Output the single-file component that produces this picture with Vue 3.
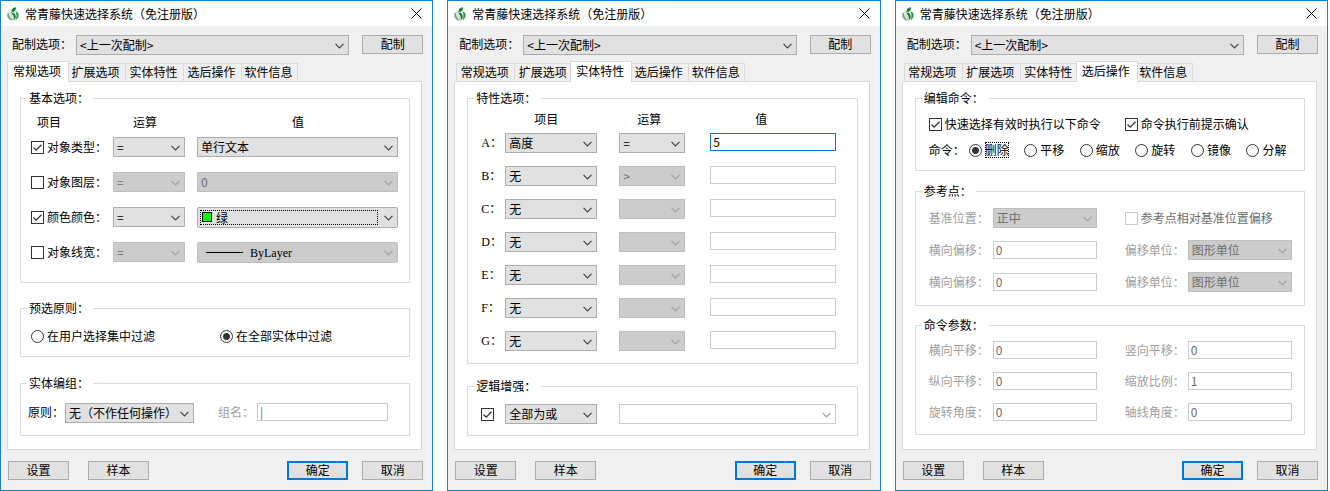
<template>
  <main class="screens">
    <section v-for="win in windows" :key="win.id" class="window">
      <header class="title-bar">
        <svg class="logo" viewBox="0 0 14 14" aria-hidden="true">
          <path d="M2.500 5C.8 6.400.8 9.400 2.400 11.400 3.800 13.200 6.400 13.600 8 13 4.800 12 2.800 9 2.500 5z" fill="#7f9f8a" />
          <path d="M3 5.200C5.400 4.800 7.800 6.400 8.600 9c.5 1.800 0 3.200-.6 4C5 12 3 9 3 5.200z" fill="#d5e2d8" />
          <path d="M9.800.200C6.800.6 5 2.200 5.600 5 8.600 5 10.400 3.200 9.800.2z" fill="#17833a" />
          <path d="M4.600 5.600C7.400 5 9.600 6.600 9.800 9.400c0 1.600-.8 3-2 3.800.6-3-.4-5.600-3.200-7.600z" fill="#1c7a3c" />
          <path d="M9.400 4.200c2.400.4 3.600 2.400 3.200 4.800-.3 2-1.600 3.600-3.200 4.200 1.400-3 1.400-6.200 0-9z" fill="#2f9a4c" />
        </svg>
        <h1>常青藤快速选择系统（免注册版）</h1>
        <button type="button" class="close" aria-label="关闭">
          <svg viewBox="0 0 11 11"><path d="M.5.5l10 10M10.5.5l-10 10" /></svg>
        </button>
      </header>

      <div class="config-row">
        <label :for="`${win.id}-config`">配制选项：</label>
        <select :id="`${win.id}-config`">
          <option>&lt;上一次配制&gt;</option>
        </select>
        <button type="button" class="btn">配制</button>
      </div>

      <div class="tabs" role="tablist">
        <button
          v-for="tab in tabs"
          :key="tab"
          type="button"
          role="tab"
          class="tab"
          :class="{ active: tab === win.tab }"
          :aria-selected="tab === win.tab"
          @click="win.tab = tab"
        >
          {{ tab }}
        </button>
      </div>

      <!-- 常规选项 -->
      <div v-if="win.tab === '常规选项'" class="panel general">
        <fieldset class="basic">
          <legend>基本选项：</legend>
          <div class="head">
            <span>项目</span>
            <span>运算</span>
            <span>值</span>
          </div>
          <div class="rows">
            <template v-for="row in basicRows" :key="row.label">
              <label class="check">
                <input v-model="row.on" type="checkbox" />{{ row.label }}：
              </label>
              <select class="op" :disabled="!row.on" :aria-label="`${row.label}运算`">
                <option>=</option>
              </select>
              <div class="value" :class="row.kind">
                <select :disabled="!row.on" :aria-label="`${row.label}值`">
                  <option>{{ row.value }}</option>
                </select>
                <i v-if="row.kind === 'color'" class="swatch"></i>
                <i v-if="row.kind === 'color'" class="focus-rect"></i>
                <i v-if="row.kind === 'line'" class="stroke"></i>
              </div>
            </template>
          </div>
        </fieldset>

        <fieldset class="preselect">
          <legend>预选原则：</legend>
          <label v-for="item in scopes" :key="item" class="check">
            <input v-model="scope" type="radio" name="scope" :value="item" />{{ item }}
          </label>
        </fieldset>

        <fieldset class="grouping">
          <legend>实体编组：</legend>
          <label for="group-rule">原则：</label>
          <select id="group-rule">
            <option>无（不作任何操作）</option>
          </select>
          <label for="group-name" class="second muted">组名：</label>
          <input id="group-name" type="text" value="|" disabled />
        </fieldset>
      </div>

      <!-- 实体特性 -->
      <div v-else-if="win.tab === '实体特性'" class="panel traits">
        <fieldset class="trait-list">
          <legend>特性选项：</legend>
          <div class="head">
            <span>项目</span>
            <span>运算</span>
            <span>值</span>
          </div>
          <div class="rows">
            <template v-for="row in traitRows" :key="row.key">
              <label :for="`trait-${row.key}`" class="letter">{{ row.key }}：</label>
              <select :id="`trait-${row.key}`" class="item">
                <option>{{ row.item }}</option>
              </select>
              <select class="op" :disabled="row.item === '无'" :aria-label="`${row.key}运算`">
                <option>{{ row.op }}</option>
              </select>
              <input
                v-model="row.value"
                type="text"
                :class="{ focused: row.key === 'A' }"
                :aria-label="`${row.key}值`"
              />
            </template>
          </div>
        </fieldset>

        <fieldset class="logic">
          <legend>逻辑增强：</legend>
          <input type="checkbox" checked aria-label="逻辑增强" />
          <select class="item" aria-label="逻辑方式">
            <option>全部为或</option>
          </select>
          <select class="blank" disabled aria-label="逻辑表达式">
            <option></option>
          </select>
        </fieldset>
      </div>

      <!-- 选后操作 -->
      <div v-else-if="win.tab === '选后操作'" class="panel actions">
        <fieldset class="commands">
          <legend>编辑命令：</legend>
          <div class="switches">
            <label class="check"><input type="checkbox" checked />快速选择有效时执行以下命令</label>
            <label class="check"><input type="checkbox" checked />命令执行前提示确认</label>
          </div>
          <div class="command-row">
            <span>命令：</span>
            <label v-for="item in commands" :key="item" class="check">
              <input v-model="command" type="radio" name="command" :value="item" />
              <span :class="{ dotted: item === command }">{{ item }}</span>
            </label>
          </div>
        </fieldset>

        <fieldset class="pairs reference">
          <legend>参考点：</legend>
          <label for="base-pos" class="muted">基准位置：</label>
          <select id="base-pos" disabled>
            <option>正中</option>
          </select>
          <label class="check second wide"><input type="checkbox" disabled />参考点相对基准位置偏移</label>
          <template v-for="n in 2" :key="n">
            <label :for="`offset-${n}`" class="muted">横向偏移：</label>
            <input :id="`offset-${n}`" type="text" value="0" disabled />
            <label :for="`unit-${n}`" class="second muted">偏移单位：</label>
            <select :id="`unit-${n}`" disabled>
              <option>图形单位</option>
            </select>
          </template>
        </fieldset>

        <fieldset class="pairs params">
          <legend>命令参数：</legend>
          <template v-for="(param, i) in params" :key="param.label">
            <label :for="`param-${i}`" class="muted" :class="{ second: i % 2 }">{{ param.label }}：</label>
            <input :id="`param-${i}`" type="text" :value="param.value" disabled />
          </template>
        </fieldset>
      </div>

      <div v-else class="panel"></div>

      <footer class="buttons">
        <button type="button" class="btn">设置</button>
        <button type="button" class="btn">样本</button>
        <button type="button" class="btn primary">确定</button>
        <button type="button" class="btn">取消</button>
      </footer>
    </section>
  </main>
</template>

<script setup>
import { ref } from 'vue';

const tabs = ['常规选项', '扩展选项', '实体特性', '选后操作', '软件信息'];

const windows = ref([
  { id: 'general', tab: '常规选项' },
  { id: 'traits', tab: '实体特性' },
  { id: 'actions', tab: '选后操作' },
]);

const basicRows = ref([
  { label: '对象类型', on: true, value: '单行文本', kind: 'plain' },
  { label: '对象图层', on: false, value: '0', kind: 'plain' },
  { label: '颜色颜色', on: true, value: '绿', kind: 'color' },
  { label: '对象线宽', on: false, value: 'ByLayer', kind: 'line' },
]);

const scopes = ['在用户选择集中过滤', '在全部实体中过滤'];
const scope = ref('在全部实体中过滤');

const traitRows = ref([
  { key: 'A', item: '高度', op: '=', value: '5' },
  { key: 'B', item: '无', op: '>', value: '' },
  { key: 'C', item: '无', op: '', value: '' },
  { key: 'D', item: '无', op: '', value: '' },
  { key: 'E', item: '无', op: '', value: '' },
  { key: 'F', item: '无', op: '', value: '' },
  { key: 'G', item: '无', op: '', value: '' },
]);

const commands = ['删除', '平移', '缩放', '旋转', '镜像', '分解'];
const command = ref('删除');

const params = [
  { label: '横向平移', value: '0' },
  { label: '竖向平移', value: '0' },
  { label: '纵向平移', value: '0' },
  { label: '缩放比例', value: '1' },
  { label: '旋转角度', value: '0' },
  { label: '轴线角度', value: '0' },
];
</script>

<style>
body {
  background: #fff;
}
</style>

<style scoped>
.screens {
  display: grid;
  grid-template-columns: repeat(3, 1fr);
  column-gap: 14px;
  padding-right: 2px;
  font-family: 'Noto Sans CJK SC', 'Liberation Sans', sans-serif;
  font-size: 12px;
  line-height: 16px;
  color: #000;
}

.screens * {
  box-sizing: border-box;
}

.window {
  display: flex;
  flex-direction: column;
  border: 1px solid #1883d7;
  background: #f0f0f0;
}

.title-bar {
  display: flex;
  align-items: center;
  height: 25px;
  padding: 0 10px 0 5px;
  background: #fff;
}

.logo {
  width: 14px;
  height: 14px;
  margin-right: 5px;
}

h1 {
  flex: 1;
  margin: 0;
  font-size: 12px;
  font-weight: 400;
  white-space: nowrap;
}

.close {
  display: flex;
  padding: 0;
  border: 0;
  background: none;
}

.close svg {
  width: 11px;
  height: 11px;
  fill: none;
  stroke: #000;
}

/* 通用控件 */
select,
input,
button {
  margin: 0;
  font: inherit;
  color: inherit;
  border-radius: 0;
  outline: none;
}

select {
  appearance: none;
  width: 100%;
  height: 20px;
  padding: 0 16px 0 3px;
  border: 1px solid #adadad;
  background: #e1e1e1
    url("data:image/svg+xml,%3Csvg xmlns='http://www.w3.org/2000/svg' width='9' height='6'%3E%3Cpath d='M.5.8l4 4 4-4' fill='none' stroke='%23444' stroke-width='1.2'/%3E%3C/svg%3E")
    no-repeat right 4px top 7px;
}

select:disabled {
  opacity: 1;
  color: #6d6d6d;
  border-color: #bfbfbf;
  background-color: #ccc;
  background-image: url("data:image/svg+xml,%3Csvg xmlns='http://www.w3.org/2000/svg' width='9' height='6'%3E%3Cpath d='M.5.8l4 4 4-4' fill='none' stroke='%23a0a0a0' stroke-width='1.2'/%3E%3C/svg%3E");
}

select.blank:disabled {
  border-color: #ccc;
  background-color: #fff;
}

input[type='text'] {
  width: 100%;
  height: 18px;
  padding: 0 2px 2px;
  border: 1px solid #ccc;
  background: #fff;
}

input[type='text'].focused {
  border-color: #0078d7;
}

input[type='text']:disabled {
  color: #6d6d6d;
}

input[type='checkbox'],
input[type='radio'] {
  appearance: none;
  flex: none;
  width: 13px;
  height: 13px;
  border: 1px solid #333;
  background: #fff;
}

input[type='checkbox']:checked {
  background: #fff
    url("data:image/svg+xml,%3Csvg xmlns='http://www.w3.org/2000/svg' width='11' height='11'%3E%3Cpath d='M1.500 5.500l2.700 2.700 5.300-5.400' fill='none' stroke='%23333' stroke-width='1.3'/%3E%3C/svg%3E")
    no-repeat center;
}

input[type='checkbox']:disabled {
  border-color: #ccc;
}

input[type='radio'] {
  border-radius: 50%;
}

input[type='radio']:checked {
  background: radial-gradient(circle, #333 3px, #fff 4px);
}

.check {
  display: flex;
  align-items: center;
  gap: 3px;
  white-space: nowrap;
}

.check:has(:disabled) {
  color: #6d6d6d;
}

.muted {
  color: #a0a0a0;
}

label {
  white-space: nowrap;
}

.btn {
  width: 61px;
  height: 19px;
  padding: 0 0 2px;
  border: 1px solid #adadad;
  background: #e1e1e1;
  line-height: 16px;
}

.btn.primary {
  border: 2px solid #0078d7;
  line-height: 14px;
}

/* 顶部配制行 */
.config-row {
  display: grid;
  grid-template-columns: 64px 1fr 61px;
  align-items: start;
  padding: 9px 9px 6px 11px;
}

.config-row label {
  line-height: 18px;
}

.config-row select {
  width: calc(100% - 13px);
}

/* 选项卡 */
.tabs {
  display: flex;
  align-items: flex-end;
  height: 20px;
  margin-left: 8px;
}

.tab {
  width: 58px;
  height: 18px;
  padding: 0 2px 2px 0;
  border: 1px solid #d9d9d9;
  border-width: 1px 0 0 1px;
  background: #f0f0f0;
  line-height: 16px;
  white-space: nowrap;
}

.tab:last-child {
  width: 57px;
  border-right-width: 1px;
}

.tab.active {
  position: relative;
  z-index: 1;
  width: 62px;
  height: 21px;
  margin: 0 -2px -1px;
  border-right-width: 1px;
  background: #fff;
}

.panel {
  flex: 1;
  margin: 0 10px 0 6px;
  padding: 8px 11px 13px 12px;
  border: 1px solid #d9d9d9;
  background: #fff;
}

fieldset {
  min-width: 0;
  margin: 0;
  padding: 0;
  border: 1px solid #dcdcdc;
}

legend {
  padding: 0 4px 0 2px;
}

.head,
.rows {
  display: grid;
}

/* 常规选项 */
.general fieldset + fieldset {
  margin-top: 17px;
}

.basic {
  padding: 0 11px 20px 10px;
}

.basic legend,
.preselect legend {
  margin-left: -4px;
}

.basic .head {
  grid-template-columns: 96px 159px 1fr;
  padding: 8px 0 7px 6px;
}

.basic .rows {
  grid-template-columns: 82px 84px 1fr;
  grid-auto-rows: 20px;
  row-gap: 15px;
}

.basic .op {
  width: 72px;
}

.value {
  position: relative;
}

.color select,
.line select {
  height: 21px;
  border-radius: 2px;
}

.color select {
  padding-left: 18px;
}

.line select {
  padding-left: 52px;
  font-family: 'Liberation Serif', serif;
  color: #000;
}

.swatch {
  position: absolute;
  top: 5px;
  left: 5px;
  width: 10px;
  height: 10px;
  border: 1px solid #000;
  background: #0f0;
}

.focus-rect {
  position: absolute;
  top: 3px;
  right: 20px;
  left: 3px;
  height: 15px;
  border: 1px dotted #000;
  pointer-events: none;
}

.stroke {
  position: absolute;
  top: 10px;
  left: 9px;
  width: 37px;
  height: 1px;
  background: #000;
}

.preselect {
  display: grid;
  grid-template-columns: 189px 1fr;
  grid-auto-rows: 18px;
  padding: 11px 10px;
}

.general .grouping {
  display: grid;
  grid-template-columns: 37px 129px 63px 1fr;
  align-items: start;
  margin-top: 18px;
  padding: 12px 21px 12px 7px;
}

.grouping legend {
  margin-left: -1px;
}

.grouping label {
  line-height: 18px;
}

.grouping .second {
  padding-left: 24px;
}

/* 实体特性 */
.trait-list {
  padding: 0 21px 12px 13px;
}

.trait-list legend,
.logic legend,
.commands legend,
.pairs legend {
  margin-left: -7px;
}

.trait-list .head {
  grid-template-columns: 103px 118px 1fr;
  padding: 5px 0 6px 53px;
}

.trait-list .rows {
  grid-template-columns: 24px 114px 91px 1fr;
  grid-auto-rows: 20px;
  row-gap: 13px;
}

.letter {
  font-family: 'Liberation Serif', 'Noto Sans CJK SC', serif;
  line-height: 20px;
}

.item {
  width: 92px;
}

.traits .op {
  width: 66px;
}

.logic {
  display: grid;
  grid-template-columns: 24px 114px 1fr;
  align-items: center;
  margin-top: 14px;
  padding: 10px 21px 11px 13px;
}

/* 选后操作 */
.actions fieldset + fieldset {
  margin-top: 12px;
}

.commands {
  padding: 9px 2px 11px 13px;
}

.switches {
  display: grid;
  grid-template-columns: 196px 1fr;
  grid-auto-rows: 18px;
  margin-bottom: 8px;
}

.command-row {
  display: grid;
  grid-template-columns: 40px repeat(6, 1fr);
  grid-auto-rows: 18px;
  align-items: center;
}

.dotted {
  outline: 1px dotted #000;
  outline-offset: -1px;
}

.pairs {
  display: grid;
  grid-template-columns: 64px 1fr 91px 1fr;
  align-items: center;
  padding: 9px 12px 13px 13px;
}

.pairs .second {
  padding-left: 28px;
}

.pairs .wide {
  grid-column: span 2;
}

.reference {
  grid-auto-rows: 20px;
  row-gap: 12px;
}

.actions .params {
  grid-auto-rows: 18px;
  row-gap: 13px;
  margin-top: 11px;
  padding-top: 8px;
}

/* 底部按钮 */
.buttons {
  display: flex;
  padding: 11px 9px 10px 7px;
}

.buttons .btn + .btn {
  margin-left: 19px;
}

.buttons .primary.btn {
  margin-left: auto;
}

.buttons .primary + .btn {
  margin-left: 14px;
}
</style>
